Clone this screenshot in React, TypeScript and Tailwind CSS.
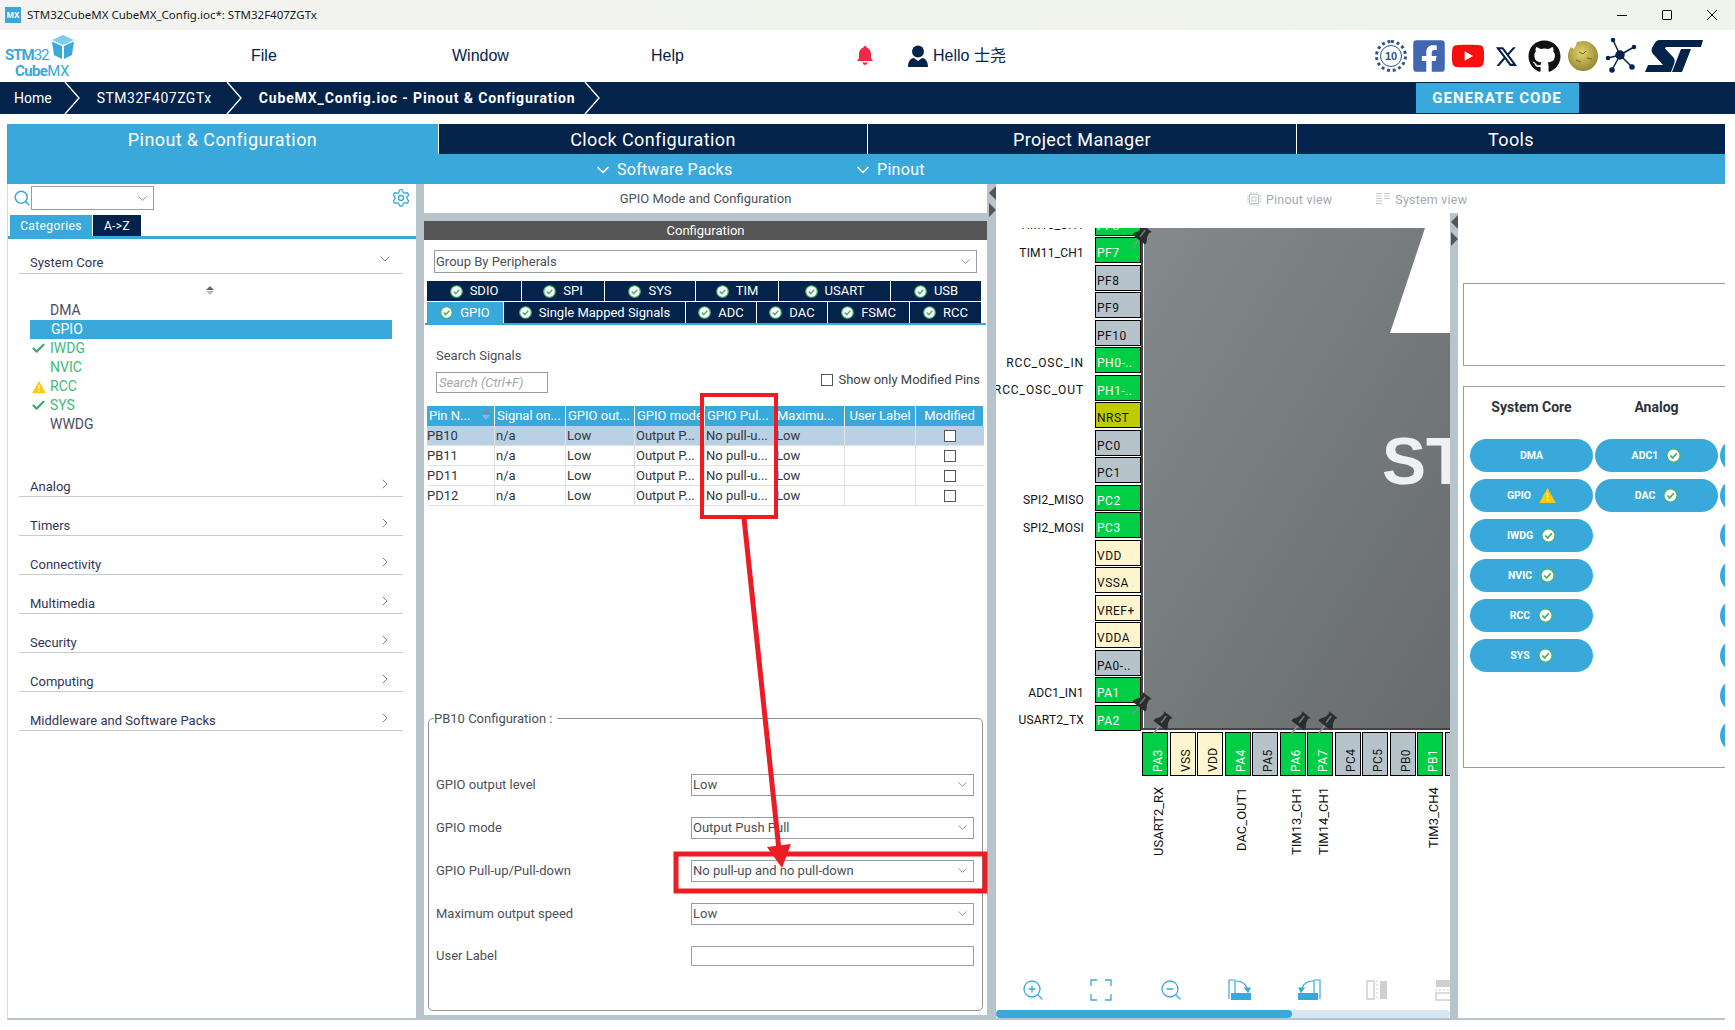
import React from 'react';
import { Check, ChevronDown, ChevronRight, Search, Settings, ZoomIn, ZoomOut } from 'lucide-react';
import { FaFacebookSquare, FaGithub, FaYoutube } from 'react-icons/fa';
import { RiTwitterXLine } from 'react-icons/ri';

const Select: React.FC<{ value?: string; className?: string }> = ({ value = '', className = '' }) => (
  <div className={`flex items-center justify-between border border-[#999ca0] bg-white pl-[1px] pr-[3px] text-[13px] text-[#4c5058] ${className}`}>
    <span>{value}</span>
    <ChevronDown size={15} strokeWidth={1} className="text-[#555]" />
  </div>
);

const OkBadge: React.FC<{ size?: number }> = ({ size = 15 }) => (
  <svg width={size} height={size} viewBox="0 0 14 14" className="shrink-0">
    <circle cx="7" cy="7" r="6.2" fill="#fff" stroke="#49b06e" strokeWidth="1.3" />
    <path d="M4 7l2.2 2.3L10 5" fill="none" stroke="#49b06e" strokeWidth="1.6" />
  </svg>
);

const Warn: React.FC<{ size?: number }> = ({ size = 14 }) => (
  <svg width={size} height={size} viewBox="0 0 16 15" className="shrink-0">
    <path d="M8 .5l7.8 14H.2z" fill="#fdc90a" />
    <path d="M7.3 5h1.4l-.2 5h-1zM7.3 11h1.4v1.500H7.3z" fill="#fff" />
  </svg>
);

const Pushpin: React.FC<{ className?: string }> = ({ className = '' }) => (
  <svg width="22" height="24" viewBox="0 0 22 24" className={`absolute overflow-visible ${className}`}>
    <g transform="rotate(38 11 12)">
      <path d="M11 13v11" stroke="#8d9092" strokeWidth="1.500" />
      <path d="M5.500 0h11l-1.500 2.500 1 4.500 3 4.500v2.500H3v-2.500l3-4.500 1-4.500z" fill="#2b2d2f" />
      <path d="M9.500 2.500h1.500V11H9.500z" fill="#75797c" />
    </g>
  </svg>
);

const SepArrows: React.FC = () => (
  <div className="flex flex-col items-center gap-[3px] pt-[2px]">
    <div className="h-0 w-0 border-y-[7px] border-r-[7px] border-y-transparent border-r-[#555]" />
    <div className="h-0 w-0 border-y-[7px] border-l-[7px] border-y-transparent border-l-[#555]" />
  </div>
);

const Chevron: React.FC = () => (
  <svg width="17" height="32" viewBox="0 0 17 32" className="shrink-0">
    <polyline points="1,0 15,16 1,32" fill="none" stroke="#fff" strokeWidth="1.4" />
  </svg>
);

const categories = ['Analog', 'Timers', 'Connectivity', 'Multimedia', 'Security', 'Computing', 'Middleware and Software Packs'];

const coreItems = [
  { name: 'DMA', color: 'text-[#4b4d5e]' },
  { name: 'GPIO', color: 'text-white', selected: true },
  { name: 'IWDG', color: 'text-[#45b878]', icon: 'ok' },
  { name: 'NVIC', color: 'text-[#45b878]' },
  { name: 'RCC', color: 'text-[#45b878]', icon: 'warn' },
  { name: 'SYS', color: 'text-[#45b878]', icon: 'ok' },
  { name: 'WWDG', color: 'text-[#4b4d5e]' },
];

const LeftPanel: React.FC = () => (
  <div className="flex w-[409px] shrink-0 flex-col border-b-2 border-l border-[#d5dbdf] border-b-[#b8c4cc] bg-white">
    <div className="flex h-[26px] items-center pl-[5px] pr-[5px] pt-[2px]">
      <Search size={18} strokeWidth={2} className="text-[#39a9dc]" />
      <Select className="ml-[0px] h-[24px] w-[123px]" />
      <Settings size={20} strokeWidth={1.6} className="ml-auto text-[#39a9dc]" />
    </div>
    <div className="mt-[5px] flex h-[21px] gap-[1px] pl-[2px] text-xs tracking-[0.4px] text-white">
      <div className="flex w-[82px] items-center justify-center bg-[#39a9dc]">Categories</div>
      <div className="flex w-[48px] items-center justify-center bg-[#03234b]">A-&gt;Z</div>
    </div>
    <div className="h-[3px] bg-[#39a9dc]" />
    <div className="ml-[11px] mr-[13px] flex h-[35px] items-end justify-between border-b border-[#c5cbd0] pb-[1px] pl-[11px] pr-[10px] text-[13px] text-[#30345a]">
      <span>System Core</span>
      <ChevronDown size={16} strokeWidth={1.1} className="mb-[5px] text-[#555]" />
    </div>
    <div className="ml-[22px] mr-[24px] flex h-[184px] flex-col">
      <div className="flex h-[27px] flex-col items-center justify-center gap-[1px] pr-[3px] pt-[5px]">
        <div className="h-0 w-0 border-x-[4px] border-b-[4px] border-x-transparent border-b-[#666]" />
        <div className="h-0 w-0 border-x-[4px] border-t-[4px] border-x-transparent border-t-[#bbb]" />
      </div>
      {coreItems.map((item) => (
        <div key={item.name} className={`relative flex h-[19px] items-center text-[14px] ${item.color} ${item.selected ? 'bg-[#39a9dc] pl-[21px]' : 'pl-[20px]'}`}>
          {item.icon === 'ok' && <Check size={15} strokeWidth={3.5} className="absolute left-[1px] text-[#3fa96c]" />}
          {item.icon === 'warn' && <span className="absolute left-[2px]"><Warn /></span>}
          {item.name}
        </div>
      ))}
    </div>
    {categories.map((c) => (
      <div key={c} className="ml-[11px] mr-[13px] flex h-[39px] items-end justify-between border-b border-[#c5cbd0] pl-[11px] pr-[10px] text-[13px] text-[#30345a]">
        <span>{c}</span>
        <ChevronRight size={16} strokeWidth={1.1} className="mb-[4px] text-[#555]" />
      </div>
    ))}
  </div>
);

const tabRow1 = ['SDIO', 'SPI', 'SYS', 'TIM', 'USART', 'USB'];
const tabRow2 = ['GPIO', 'Single Mapped Signals', 'ADC', 'DAC', 'FSMC', 'RCC'];

const tableHead = ['Pin N...', 'Signal on...', 'GPIO out...', 'GPIO mode', 'GPIO Pul...', 'Maximu...', 'User Label', 'Modified'];
const tableRows = ['PB10', 'PB11', 'PD11', 'PD12'];

const configRows = [
  { label: 'GPIO output level', value: 'Low' },
  { label: 'GPIO mode', value: 'Output Push Pull' },
  { label: 'GPIO Pull-up/Pull-down', value: 'No pull-up and no pull-down' },
  { label: 'Maximum output speed', value: 'Low' },
];

const CenterPanel: React.FC = () => (
  <div className="flex w-[563px] shrink-0 flex-col bg-[#b8c4cc] pb-[5px]">
    <div className="flex h-[29px] items-center justify-center bg-white text-[13px] text-[#4c5058]">GPIO Mode and Configuration</div>
    <div className="mt-[8px] flex h-[19px] items-center justify-center bg-[#555] text-[13px] text-white">Configuration</div>
    <div className="flex flex-1 flex-col bg-white">
      <Select value="Group By Peripherals" className="mx-[10px] mt-[10px] h-[23px]" />
      <div className="mx-[3px] mt-[8px] grid h-[20px] grid-cols-[95px_83px_91px_83px_112px_91px] text-[13px] text-white">
        {tabRow1.map((t) => (
          <div key={t} className="flex items-center justify-center gap-[7px] border-r border-white bg-[#03234b]">
            <OkBadge size={13} />{t}
          </div>
        ))}
      </div>
      <div className="mx-[3px] mt-[1px] grid h-[21px] grid-cols-[77px_182px_71px_71px_82px_72px] text-[13px] text-white">
        {tabRow2.map((t, i) => (
          <div key={t} className={`flex items-center justify-center gap-[7px] border-r border-white ${i === 0 ? 'bg-[#39a9dc]' : 'bg-[#03234b]'}`}>
            <OkBadge size={13} />{t}
          </div>
        ))}
      </div>
      <div className="ml-[1px] mr-[1px] h-[2px] bg-[#39a9dc]" />
      <div className="mt-[23px] pl-[12px] text-[13px] leading-[16px] text-[#4c5058]">Search Signals</div>
      <div className="mt-[8px] flex items-center justify-between pl-[12px] pr-[7px]">
        <div className="flex h-[21px] w-[112px] items-center border border-[#999ca0] pl-[2px] text-[13px] italic text-[#a5a8ab]">Search (Ctrl+F)</div>
        <div className="mb-[5px] flex items-center gap-[5px] text-[13px] leading-[16px] text-[#3c3f48]">
          <div className="h-[12px] w-[12px] border border-[#555]" />
          Show only Modified Pins
        </div>
      </div>
      <div className="mx-[3px] mt-[13px] grid grid-cols-[68px_71px_69px_70px_70px_70px_71px_68px] text-[13px]">
        {tableHead.map((h, i) => (
          <div key={h} className={`relative flex h-[20px] items-center overflow-hidden whitespace-nowrap border-r border-white bg-[#39a9dc] text-white ${i > 5 ? 'justify-center' : 'pl-[2px]'}`}>
            {h}
            {i === 0 && (
              <span className="absolute right-[4px] top-[3px] flex flex-col gap-[1px]">
                <span className="h-0 w-0 border-x-[4px] border-b-[5px] border-x-transparent border-b-[#6f8ea5]" />
                <span className="h-0 w-0 border-x-[4px] border-t-[5px] border-x-transparent border-t-[#7fb8d8]" />
              </span>
            )}
          </div>
        ))}
        {tableRows.map((pin, r) => {
          const cells = [pin, 'n/a', 'Low', 'Output P...', 'No pull-u...', 'Low', ''];
          return (
            <React.Fragment key={pin}>
              {cells.map((c, i) => (
                <div key={i} className={`flex h-[20px] items-center overflow-hidden whitespace-nowrap border-b border-r border-[#dfe2e5] text-[#33363c] ${i === 0 ? 'pl-0' : 'pl-[1px]'} ${r === 0 ? 'bg-[#b9d0e5]' : 'bg-white'}`}>
                  {c}
                </div>
              ))}
              <div className={`flex h-[20px] items-center justify-center border-b border-[#dfe2e5] ${r === 0 ? 'bg-[#b9d0e5]' : 'bg-white'}`}>
                <div className="h-[12px] w-[12px] border border-[#555] bg-white" />
              </div>
            </React.Fragment>
          );
        })}
      </div>
      <fieldset className="mx-[4px] mb-[4px] mt-auto h-[302px] rounded-[5px] border border-[#8e9295] px-[7px]">
        <legend className="-ml-[2px] pr-[5px] text-[13px] text-[#4c5058]">PB10 Configuration :</legend>
        <div className="mt-[45px] grid grid-cols-[255px_283px] items-center gap-y-[21px] text-[13px] text-[#4c5058]">
          {configRows.map((r) => (
            <React.Fragment key={r.label}>
              <div>{r.label}</div>
              <Select value={r.value} className="h-[22px]" />
            </React.Fragment>
          ))}
          <div>User Label</div>
          <div className="h-[20px] border border-[#999ca0]" />
        </div>
      </fieldset>
    </div>
  </div>
);

const GREEN = 'bg-[#00cf46] text-white';
const GRAY = 'bg-[#b7c3cb] text-[#111]';
const CREAM = 'bg-[#fff5cf] text-[#111]';
const OLIVE = 'bg-[#bfcb00] text-[#111]';

const leftPins: { n: string; c: string; l?: string; wide?: boolean }[] = [
  { n: 'PF6', c: GREEN, l: 'TIM10_CH1' },
  { n: 'PF7', c: GREEN, l: 'TIM11_CH1' },
  { n: 'PF8', c: GRAY },
  { n: 'PF9', c: GRAY },
  { n: 'PF10', c: GRAY },
  { n: 'PH0-..', c: GREEN, l: 'RCC_OSC_IN', wide: true },
  { n: 'PH1-..', c: GREEN, l: 'RCC_OSC_OUT', wide: true },
  { n: 'NRST', c: OLIVE },
  { n: 'PC0', c: GRAY },
  { n: 'PC1', c: GRAY },
  { n: 'PC2', c: GREEN, l: 'SPI2_MISO' },
  { n: 'PC3', c: GREEN, l: 'SPI2_MOSI' },
  { n: 'VDD', c: CREAM },
  { n: 'VSSA', c: CREAM },
  { n: 'VREF+', c: CREAM },
  { n: 'VDDA', c: CREAM },
  { n: 'PA0-..', c: GRAY },
  { n: 'PA1', c: GREEN, l: 'ADC1_IN1' },
  { n: 'PA2', c: GREEN, l: 'USART2_TX' },
];

const bottomPins = [
  { n: 'PA3', c: GREEN, l: 'USART2_RX' },
  { n: 'VSS', c: CREAM },
  { n: 'VDD', c: CREAM },
  { n: 'PA4', c: GREEN, l: 'DAC_OUT1' },
  { n: 'PA5', c: GRAY },
  { n: 'PA6', c: GREEN, l: 'TIM13_CH1' },
  { n: 'PA7', c: GREEN, l: 'TIM14_CH1' },
  { n: 'PC4', c: GRAY },
  { n: 'PC5', c: GRAY },
  { n: 'PB0', c: GRAY },
  { n: 'PB1', c: GREEN, l: 'TIM3_CH4' },
  { n: '', c: GRAY },
];

const ChipCanvas: React.FC = () => (
  <div className="relative flex-1 overflow-hidden bg-white">
    <div className="absolute left-[145px] top-0 h-[502px] w-[309px] overflow-hidden border-b-2 border-l-2 border-[#444] bg-gradient-to-br from-[#848a8c] to-[#676b6c]">
      <div className="h-full w-full border-l border-white">
        <svg width="60" height="105" viewBox="0 0 60 105" className="absolute right-0 top-0">
          <path d="M35 0L0 105H60V0z" fill="#fff" />
        </svg>
        <div className="absolute left-[239px] top-[200px] whitespace-nowrap font-['Liberation_Sans',sans-serif] text-[66px] font-bold leading-none text-[#eef0f2]">ST</div>
      </div>
    </div>
    {leftPins.map((p, i) => {
      const top = -18.5 + i * 27.5;
      return (
        <React.Fragment key={p.n}>
          <div className={`absolute left-[99px] flex h-[26px] w-[46px] items-end border border-black pb-[1px] pl-[1px] text-xs tracking-[0.5px] ${p.c}`} style={{ top }}>
            {p.n}
          </div>
          {p.l && (
            <div className={`absolute right-[366px] whitespace-nowrap text-xs text-[#111] ${p.wide ? 'tracking-[0.9px]' : 'tracking-[0.2px]'}`} style={{ top: top + 7.5 }}>
              {p.l}
            </div>
          )}
        </React.Fragment>
      );
    })}
    {bottomPins.map((p, i) => {
      const left = 146 + i * 27.5;
      return (
        <React.Fragment key={i}>
          <div className={`absolute top-[504px] flex h-[44px] w-[26px] rotate-180 items-center justify-start border border-black pr-[5px] pt-[3px] text-xs tracking-[0.4px] [writing-mode:vertical-rl] ${p.c}`} style={{ left }}>
            {p.n}
          </div>
          {p.l && (
            <div className="absolute top-[559px] h-[72px] rotate-180 whitespace-nowrap text-right text-[13px] text-[#111] [writing-mode:vertical-rl]" style={{ left: left + 7 }}>
              {p.l}
            </div>
          )}
        </React.Fragment>
      );
    })}
    <Pushpin className="left-[133px] top-[-2px]" />
    <Pushpin className="left-[133px] top-[465px]" />
    <Pushpin className="left-[154px] top-[484px]" />
    <Pushpin className="left-[292px] top-[484px]" />
    <Pushpin className="left-[319px] top-[484px]" />
  </div>
);

const Toolbar: React.FC = () => (
  <div className="flex h-[40px] items-center overflow-hidden pl-[25px]">
    <div className="flex w-[69px] shrink-0"><ZoomIn size={24} strokeWidth={1.3} className="text-[#39a9dc]" /></div>
    <div className="flex w-[69px] shrink-0">
      <svg width="22" height="22" viewBox="0 0 22 22" fill="none" stroke="#39a9dc" strokeWidth="1.3">
        <path d="M1 7V1h6M15 1h6v6M21 15v6h-6M7 21H1v-6" />
      </svg>
    </div>
    <div className="flex w-[69px] shrink-0"><ZoomOut size={24} strokeWidth={1.3} className="text-[#39a9dc]" /></div>
    <div className="flex w-[69px] shrink-0">
      <svg width="24" height="22" viewBox="0 0 24 22" fill="none" stroke="#39a9dc" strokeWidth="1.2">
        <path d="M1 20V1h6v13" />
        <path d="M8 2c5 0 9 2 11 7" />
        <path d="M17 9h5l-2 4z" fill="#39a9dc" />
        <rect x="3" y="14" width="20" height="7" fill="#39a9dc" stroke="none" />
      </svg>
    </div>
    <div className="flex w-[69px] shrink-0">
      <svg width="24" height="22" viewBox="0 0 24 22" fill="none" stroke="#39a9dc" strokeWidth="1.2">
        <path d="M23 20V1h-6v13" />
        <path d="M16 2C11 2 7 4 5 9" />
        <path d="M7 9H2l2 4z" fill="#39a9dc" />
        <rect x="1" y="14" width="20" height="7" fill="#39a9dc" stroke="none" />
      </svg>
    </div>
    <div className="flex w-[69px] shrink-0">
      <svg width="22" height="20" viewBox="0 0 22 20">
        <rect x="1" y="1" width="7" height="18" fill="none" stroke="#cfcfcf" strokeWidth="1.5" />
        <path d="M11 0v20" stroke="#cfcfcf" strokeDasharray="2 2" />
        <rect x="14" y="1" width="7" height="18" fill="#cfcfcf" />
      </svg>
    </div>
    <div className="flex shrink-0">
      <svg width="22" height="22" viewBox="0 0 22 22">
        <rect x="1" y="1" width="20" height="7" fill="#cfcfcf" />
        <path d="M0 11h22" stroke="#cfcfcf" strokeDasharray="2 2" />
        <rect x="1" y="14" width="20" height="7" fill="none" stroke="#cfcfcf" strokeWidth="1.5" />
      </svg>
    </div>
  </div>
);

const MiddlePanel: React.FC = () => (
  <div className="flex w-[454px] shrink-0 flex-col border-b-2 border-[#b8c4cc] bg-white">
    <div className="relative z-10 flex h-[44px] items-start whitespace-nowrap pl-[251px] pt-[6px] text-[12.5px] leading-[19px] tracking-[0.2px] text-[#a5a9ad]">
      <svg width="14" height="14" viewBox="0 0 14 14" fill="none" stroke="#c4c7c9" className="mr-[5px] mt-[2px] shrink-0">
        <rect x="2.500" y="2.500" width="9" height="9" />
        <rect x="5" y="5" width="4" height="4" />
        <path d="M4 0v2M7 0v2M10 0v2M4 12v2M7 12v2M10 12v2M0 4h2M0 7h2M0 10h2M12 4h2M12 7h2M12 10h2" />
      </svg>
      <span>Pinout view</span>
      <svg width="14" height="14" viewBox="0 0 14 14" fill="none" stroke="#c4c7c9" className="ml-[44px] mr-[5px] mt-[2px] shrink-0">
        <path d="M0 1.500h6M8 1.500h6M0 4h6M8 4h6M0 6.500h6M8 6.500h6M0 9h6M0 11.500h6" />
      </svg>
      <span>System view</span>
    </div>
    <ChipCanvas />
    <Toolbar />
    <div className="h-[8px] rounded-full bg-[#d6e6f3]">
      <div className="h-[8px] w-[296px] rounded-full bg-[#39a9dc]" />
    </div>
  </div>
);

const Pill: React.FC<{ name?: string; badge?: 'ok' | 'warn' }> = ({ name, badge }) => (
  <div className="flex h-[33px] w-[123px] items-center justify-center gap-[8px] rounded-full bg-[#39a9dc] text-[10.5px] font-bold text-white">
    <span>{name}</span>
    {badge === 'ok' && <OkBadge />}
    {badge === 'warn' && <Warn size={17} />}
  </div>
);

const RightPanel: React.FC = () => {
  const core: { n: string; b?: 'ok' | 'warn' }[] = [
    { n: 'DMA' },
    { n: 'GPIO', b: 'warn' },
    { n: 'IWDG', b: 'ok' },
    { n: 'NVIC', b: 'ok' },
    { n: 'RCC', b: 'ok' },
    { n: 'SYS', b: 'ok' },
  ];
  return (
    <div className="flex w-[267px] shrink-0 flex-col overflow-hidden border-b-2 border-[#b8c4cc] bg-white pl-[5px]">
      <div className="mt-[99px] h-[83px] border-y border-l border-[#999ca0]" />
      <div className="mt-[20px] h-[382px] overflow-hidden border-y border-l border-[#999ca0] pl-[6px]">
        <div className="flex w-[400px] gap-[2px]">
          <div className="flex w-[123px] flex-col gap-[7px]">
            <div className="flex h-[45px] items-end justify-center text-[14px] font-bold text-[#30323a]"><span className="mb-[14px]">System Core</span></div>
            {core.map((c) => <Pill key={c.n} name={c.n} badge={c.b} />)}
          </div>
          <div className="flex w-[123px] flex-col gap-[7px]">
            <div className="flex h-[45px] items-end justify-center text-[14px] font-bold text-[#30323a]"><span className="mb-[14px]">Analog</span></div>
            <Pill name="ADC1" badge="ok" />
            <Pill name="DAC" badge="ok" />
          </div>
          <div className="flex w-[123px] flex-col gap-[7px]">
            <div className="h-[45px]" />
            {Array.from({ length: 8 }).map((_, i) => <Pill key={i} />)}
          </div>
        </div>
      </div>
    </div>
  );
};

const TopLogo: React.FC = () => (
  <div className="relative h-[52px] w-[80px] shrink-0 font-['Roboto',sans-serif] text-[#39a9dc]">
    <svg width="24" height="24" viewBox="0 0 24 24" className="absolute left-[51px] top-[5px]">
      <path d="M12 0l11 5-11 5L1 5z" fill="#7fcbee" />
      <path d="M1 6.500l10 4.600V24L3 20z" fill="#39a9dc" />
      <path d="M23 6.500L13 11.100V24l8-4z" fill="#39a9dc" />
    </svg>
    <div className="absolute left-[5px] top-[16px] text-[15px] leading-[18px] tracking-[-1px]"><b>STM</b>32</div>
    <div className="absolute left-[15px] top-[33px] text-[15px] leading-[16px] tracking-[-0.6px]"><b>Cube</b>MX</div>
  </div>
);

const SocialIcons: React.FC = () => (
  <div className="flex items-center gap-[6px]">
    <div className="relative flex h-[32px] w-[32px] items-center justify-center rounded-full border-[3px] border-dotted border-[#2e5487] bg-white text-[11px] font-bold leading-none text-[#2e5487]">
      <div className="flex h-[22px] w-[22px] items-center justify-center rounded-full border border-[#2e5487]">10</div>
    </div>
    <FaFacebookSquare size={36} className="mx-[-2px] text-[#4267b2]" />
    <FaYoutube size={34} className="text-[#f50f0f]" />
    <RiTwitterXLine size={25} className="mx-[3px] text-[#03234b]" />
    <FaGithub size={33} className="text-[#111]" />
    <svg width="32" height="32" viewBox="0 0 32 32">
      <defs>
        <radialGradient id="globe" cx="0.45" cy="0.4" r="0.65">
          <stop offset="0" stopColor="#e3d56c" />
          <stop offset="1" stopColor="#8f8233" />
        </radialGradient>
      </defs>
      <path d="M16 1a15 15 0 1 1-12 6l3 2 2-4 1-3z" fill="url(#globe)" />
      <path d="M12 12l4 2 3-3M20 18l5 1M9 20l5 2" stroke="#6e6426" strokeWidth="1" fill="none" />
    </svg>
    <svg width="32" height="36" viewBox="0 0 32 36" fill="#03234b" stroke="#03234b" strokeWidth="1.5">
      <path d="M15 17L8 2M15 17L29 9M15 17L3 20M15 17L7 32M15 17L27 29" />
      <circle cx="15" cy="17" r="4" />
      <circle cx="8" cy="2" r="1.5" />
      <circle cx="29" cy="9" r="1.5" />
      <circle cx="3" cy="20" r="1.5" />
      <circle cx="7" cy="32" r="2" />
      <circle cx="27" cy="29" r="2" />
    </svg>
    <svg width="58" height="32" viewBox="0 0 58 32" className="ml-[2px]" fill="#03234b">
      <path d="M14 0H58L56 7H22c-2 0-2.500 1.500-1 2.500L28 17c2 2 2 4 1 7l-3 8H0l3-7h15L9 15c-3-3-3-6-1-9 2-4 4-6 6-6z" />
      <path d="M36 9H46L37 32H27z" />
    </svg>
  </div>
);

const App: React.FC = () => {
  return (
    <div className="relative flex h-[1030px] w-[1735px] flex-col overflow-hidden bg-white font-['Roboto','Noto_Sans_CJK_SC',sans-serif]">
      {/* title bar */}
      <div className="flex h-[30px] shrink-0 items-center bg-gradient-to-r from-[#f3f3f1] to-[#f0f4ea] pl-[5px] font-['Noto_Sans',sans-serif] text-[11.5px] text-[#1a1a1a]">
        <div className="mr-[6px] flex h-[16px] w-[16px] items-center justify-center bg-[#39a9dc] text-[8px] font-bold text-white">MX</div>
        <span>STM32CubeMX CubeMX_Config.ioc*: STM32F407ZGTx</span>
        <div className="ml-auto flex items-center gap-[35px] pr-[18px]">
          <div className="h-[1px] w-[10px] bg-black" />
          <div className="h-[10px] w-[10px] rounded-[1px] border border-black" />
          <svg width="10" height="10" viewBox="0 0 10 10" stroke="#000"><path d="M0 0l10 10M10 0L0 10" /></svg>
        </div>
      </div>

      {/* menu bar */}
      <div className="flex h-[52px] shrink-0 items-center font-['Liberation_Sans','Noto_Sans_CJK_SC',sans-serif] text-[16px] text-[#03234b]">
        <TopLogo />
        <span className="ml-[171px] w-[201px]">File</span>
        <span className="w-[199px]">Window</span>
        <span className="w-[205px]">Help</span>
        <svg width="18" height="20" viewBox="0 0 18 20" fill="#f02a46">
          <path d="M9 0c1 0 1.500.7 1.500 1.500C13.500 2.300 15 5 15 8v4l2 3H1l2-3V8c0-3 1.500-5.700 4.500-6.500C7.500.7 8 0 9 0z" />
          <path d="M6.500 16.500h5a2.500 2.500 0 0 1-5 0z" />
        </svg>
        <svg width="22" height="22" viewBox="0 0 22 22" fill="#03234b" className="ml-[33px] mr-[4px]">
          <circle cx="11" cy="6.500" r="6" />
          <path d="M1 22c0-6 3-9 6-9l4 3 4-3c3 0 6 3 6 9z" />
        </svg>
        <span className="whitespace-nowrap">Hello 士尧</span>
        <div className="ml-auto pr-[32px]"><SocialIcons /></div>
      </div>

      {/* breadcrumb */}
      <div className="flex h-[32px] shrink-0 items-center bg-[#03234b] pl-[14px] text-[14px] text-white">
        <span>Home</span>
        <div className="ml-[12px] mr-[16px]"><Chevron /></div>
        <span className="tracking-[0.5px]">STM32F407ZGTx</span>
        <div className="ml-[14px] mr-[16px]"><Chevron /></div>
        <span className="font-bold tracking-[0.87px]">CubeMX_Config.ioc - Pinout &amp; Configuration</span>
        <div className="ml-[8px]"><Chevron /></div>
        <div className="ml-[815px] flex h-[30px] w-[163px] items-center justify-center bg-[#39a9dc] text-[15px] font-bold tracking-[1px]">GENERATE CODE</div>
      </div>

      {/* main tabs */}
      <div className="ml-[7px] mt-[10px] flex h-[30px] w-[1718px] shrink-0 text-[18px] tracking-[0.4px] text-white">
        <div className="flex w-[431px] items-center justify-center bg-[#39a9dc]">Pinout &amp; Configuration</div>
        <div className="flex w-[429px] items-center justify-center border-l border-white bg-[#03234b]">Clock Configuration</div>
        <div className="flex w-[429px] items-center justify-center border-l border-white bg-[#03234b]">Project Manager</div>
        <div className="flex w-[429px] items-center justify-center border-l border-white bg-[#03234b]">Tools</div>
      </div>
      <div className="ml-[7px] flex h-[30px] w-[1718px] shrink-0 items-center bg-[#39a9dc] pl-[586px] pt-[1px] text-[16px] tracking-[0.3px] text-white">
        <ChevronDown size={20} strokeWidth={2} className="mr-[4px]" />
        <span className="w-[236px]">Software Packs</span>
        <ChevronDown size={20} strokeWidth={2} className="mr-[4px]" />
        <span>Pinout</span>
      </div>

      {/* body */}
      <div className="mb-[10px] ml-[7px] flex min-h-0 w-[1718px] flex-1">
        <LeftPanel />
        <div className="w-[8px] shrink-0 bg-[#b8c4cc]" />
        <CenterPanel />
        <div className="w-[9px] shrink-0 bg-[#b8c4cc] pl-[1px]"><SepArrows /></div>
        <MiddlePanel />
        <div className="mt-[29px] w-[8px] shrink-0 bg-[#b8c4cc]"><SepArrows /></div>
        <RightPanel />
      </div>

      {/* annotation overlay */}
      <svg width="1735" height="1030" className="pointer-events-none absolute inset-0">
        <rect x="702" y="395" width="74" height="122" fill="none" stroke="#ec1c24" strokeWidth="4" />
        <rect x="676" y="854" width="309" height="37" fill="none" stroke="#ec1c24" strokeWidth="5" />
        <path d="M744 518L779 850" stroke="#ec1c24" strokeWidth="5" />
        <path d="M767 847L791 844L782 868z" fill="#ec1c24" />
      </svg>
    </div>
  );
};

export default App;
